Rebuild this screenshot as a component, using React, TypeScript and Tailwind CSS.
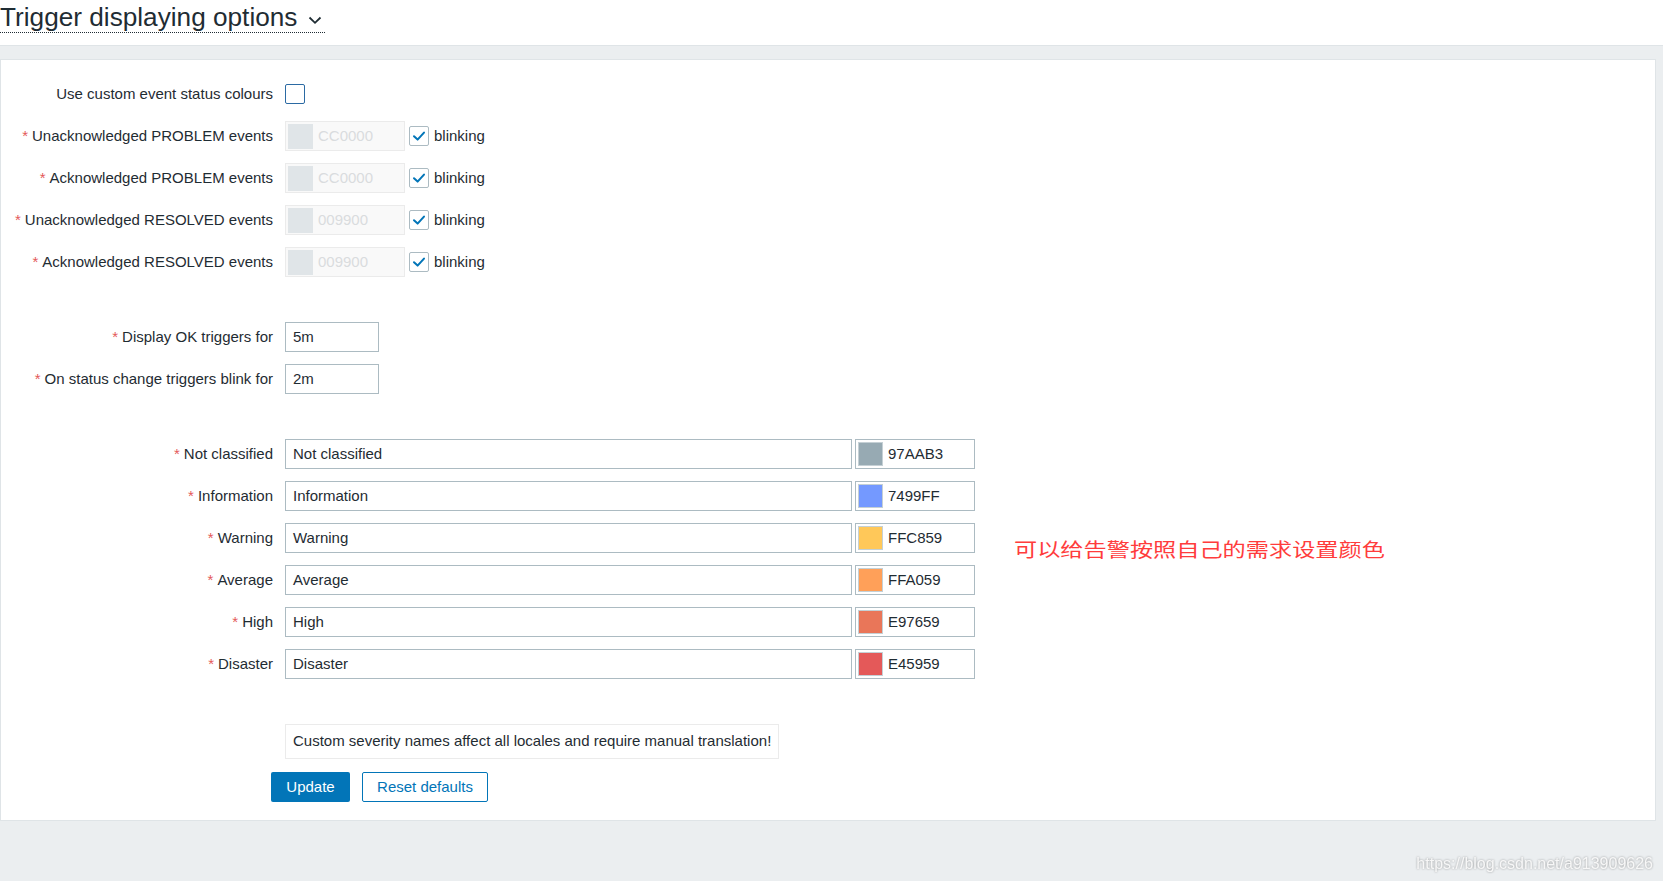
import React, { useState } from 'react';

const FONT = { fontFamily: '"Liberation Sans", Arial, sans-serif' };

const Req = () => <span className="text-[#e45959] mr-[4px]">*</span>;

const Check = ({ checked, accent }: { checked: boolean; accent?: boolean }) => (
  <span
    className={`w-[20px] h-[20px] rounded-[2px] border bg-white flex items-center justify-center ${
      accent ? 'border-[#2b6aa3]' : 'border-[#acbbc2]'
    }`}
  >
    {checked && (
      <svg width="14" height="12" viewBox="0 0 14 12" fill="none">
        <path d="M2 6.2 L5.6 9.6 L12 2.6" stroke="#0275b8" strokeWidth="2" strokeLinecap="round" strokeLinejoin="round" />
      </svg>
    )}
  </span>
);

const Row = ({ label, required = true, children }: { label: string; required?: boolean; children: React.ReactNode }) => (
  <div className="flex items-center h-[30px]">
    <div className="w-[272px] text-right shrink-0 whitespace-nowrap">
      {required && <Req />}
      {label}
    </div>
    <div className="ml-[12px] flex items-center">{children}</div>
  </div>
);

const statusRows = [
  { label: 'Unacknowledged PROBLEM events', value: 'CC0000' },
  { label: 'Acknowledged PROBLEM events', value: 'CC0000' },
  { label: 'Unacknowledged RESOLVED events', value: '009900' },
  { label: 'Acknowledged RESOLVED events', value: '009900' },
];

const severities = [
  { name: 'Not classified', color: '97AAB3' },
  { name: 'Information', color: '7499FF' },
  { name: 'Warning', color: 'FFC859' },
  { name: 'Average', color: 'FFA059' },
  { name: 'High', color: 'E97659' },
  { name: 'Disaster', color: 'E45959' },
];

const swatchBg: Record<string, string> = {
  '97AAB3': 'bg-[#97aab3]',
  '7499FF': 'bg-[#7499ff]',
  FFC859: 'bg-[#ffc859]',
  FFA059: 'bg-[#ffa059]',
  E97659: 'bg-[#e97659]',
  E45959: 'bg-[#e45959]',
};

export default function App() {
  const [custom] = useState(false);

  return (
    <div className="relative min-h-screen h-[881px] bg-[#ebeef0] text-[15px] text-[#1f2c33] overflow-hidden" style={FONT}>
      {/* header */}
      <header className="h-[46px] bg-white border-b border-[#dfe4e7]">
        <h1 className="inline-flex items-center mt-[3px] text-[26.2px] leading-[29px] font-normal border-b border-dotted border-[#1f2c33]">
          Trigger displaying options
          <svg className="ml-[11px] mr-[3px] mt-[5px]" width="14" height="9" viewBox="0 0 14 9" fill="none">
            <path d="M1.5 1.5 L7 6.8 L12.5 1.5" stroke="#1f2c33" strokeWidth="1.8" />
          </svg>
        </h1>
      </header>

      {/* form panel */}
      <div className="mt-[13px] mr-[7px] bg-white border border-[#dfe4e7] pt-[19px] pb-[18px] flex flex-col gap-[12px]">
        <Row label="Use custom event status colours" required={false}>
          <Check checked={custom} accent />
        </Row>

        {statusRows.map((r) => (
          <Row key={r.label} label={r.label}>
            <div className="w-[120px] h-[30px] border border-[#ebebeb] bg-[#f9f9f9] flex items-center pl-[2px]">
              <span className="w-[25px] h-[25px] bg-[#e0e5e8]" />
              <span className="ml-[5px] text-[#d9dcde]">{r.value}</span>
            </div>
            <span className="ml-[4px]">
              <Check checked />
            </span>
            <span className="ml-[5px]">blinking</span>
          </Row>
        ))}

        <div className="h-[21px]" />

        <Row label="Display OK triggers for">
          <div className="w-[94px] h-[30px] border border-[#acbbc2] flex items-center pl-[7px]">5m</div>
        </Row>
        <Row label="On status change triggers blink for">
          <div className="w-[94px] h-[30px] border border-[#acbbc2] flex items-center pl-[7px]">2m</div>
        </Row>

        <div className="h-[21px]" />

        {severities.map((s) => (
          <Row key={s.name} label={s.name}>
            <div className="w-[567px] h-[30px] border border-[#acbbc2] flex items-center pl-[7px]">{s.name}</div>
            <div className="ml-[3px] w-[120px] h-[30px] border border-[#acbbc2] flex items-center pl-[2px]">
              <span className={`w-[25px] h-[24px] border border-[#c5d0d5] ${swatchBg[s.color]}`} />
              <span className="ml-[5px]">{s.color}</span>
            </div>
            {s.name === 'Warning' && (
              <span
                className="ml-[39px] translate-y-[11px] text-[19px] text-[#ff3c3c] whitespace-nowrap scale-x-[1.22] origin-left"
                style={{ fontFamily: '"Noto Sans CJK SC", sans-serif' }}
              >
                可以给告警按照自己的需求设置颜色
              </span>
            )}
          </Row>
        ))}

        <div className="h-[21px]" />

        <div className="ml-[284px] w-[494px] h-[35px] border border-[#ebebeb] flex items-center pl-[7px]">
          Custom severity names affect all locales and require manual translation!
        </div>

        <div className="ml-[270px] mt-px flex gap-[12px]">
          <button className="w-[79px] h-[30px] rounded-[2px] bg-[#0275b8] text-white">Update</button>
          <button className="w-[126px] h-[30px] rounded-[2px] border border-[#0275b8] bg-white text-[#0275b8]">Reset defaults</button>
        </div>
      </div>

      <span className="absolute right-[10px] bottom-[5px] text-[16px] text-[#f7f7f7] drop-shadow-[0_0_1px_rgba(0,0,0,0.35)]">
        https://blog.csdn.net/a913909626
      </span>
    </div>
  );
}
